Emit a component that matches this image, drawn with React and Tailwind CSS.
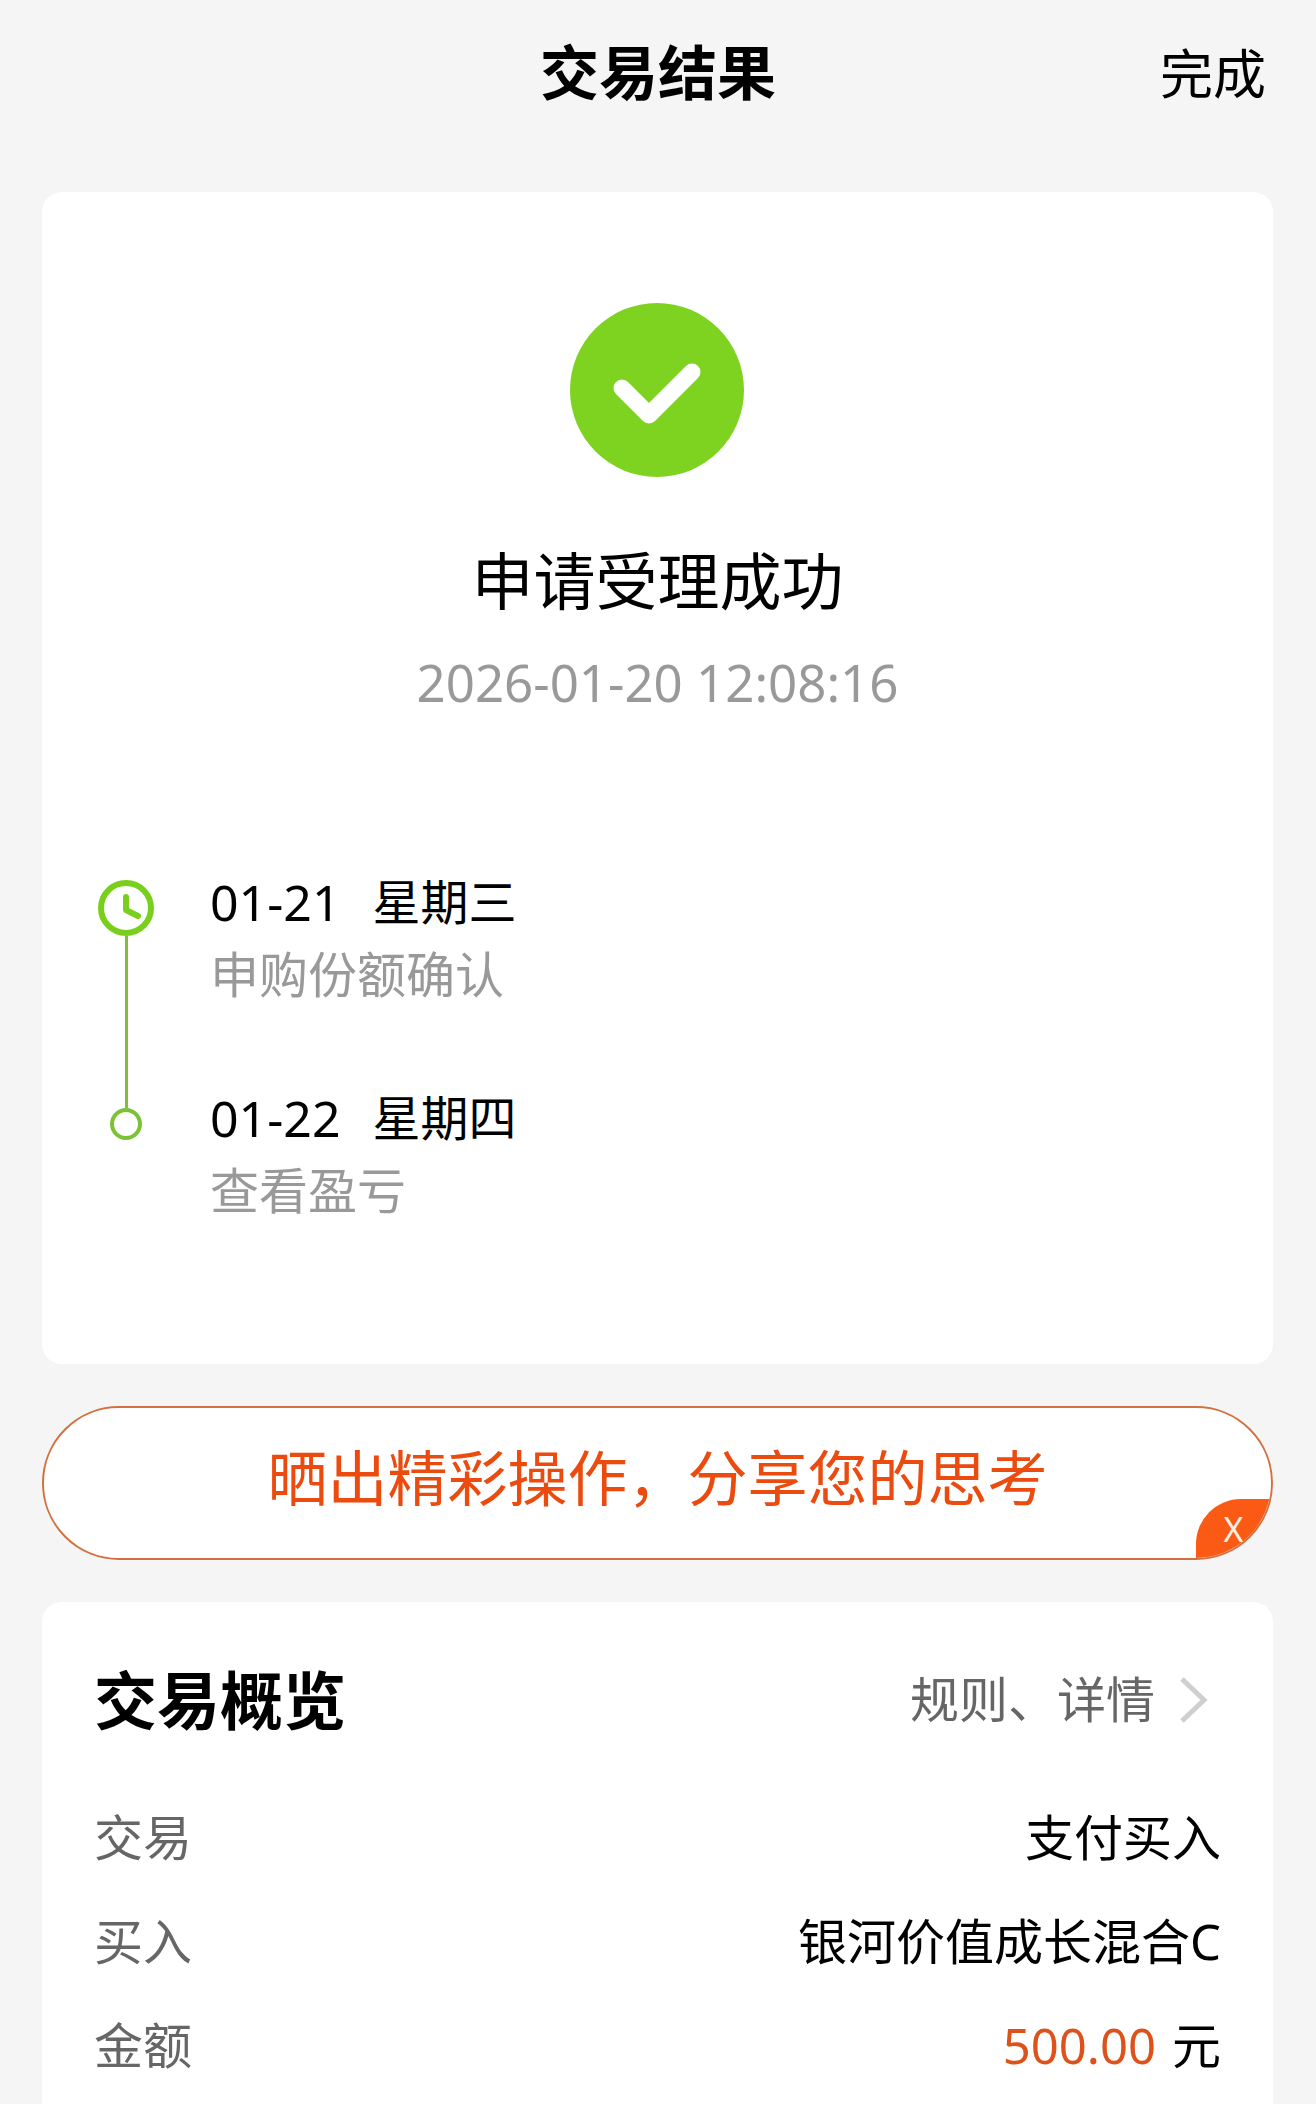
const steps = [
  { date: "01-21", weekday: "星期三", label: "申购份额确认" },
  { date: "01-22", weekday: "星期四", label: "查看盈亏" },
];

const details = [
  { label: "交易", value: "支付买入" },
  { label: "买入", value: "银河价值成长混合C" },
  { label: "金额", amount: "500.00", value: "元" },
];

const SuccessIcon = () => (
  <svg width="180" height="176" viewBox="0 0 180 176" aria-hidden="true">
    <circle cx="89" cy="88" r="87" fill="#7ed321" />
    <path
      d="M54 86 L81 113 L124 70"
      fill="none"
      stroke="#fff"
      strokeWidth="17"
      strokeLinecap="round"
      strokeLinejoin="round"
    />
  </svg>
);

const ClockIcon = () => (
  <svg width="56" height="56" viewBox="0 0 56 56" aria-hidden="true">
    <circle cx="28" cy="28" r="25" fill="none" stroke="#78d01c" strokeWidth="6" />
    <path
      d="M28 17 V30 L40 36"
      fill="none"
      stroke="#78d01c"
      strokeWidth="6"
      strokeLinecap="round"
      strokeLinejoin="round"
    />
  </svg>
);

const Header = () => (
  <header className="grid grid-cols-[1fr_auto_1fr] items-end pt-7 pb-[76px] px-[50px]">
    <h1 className="col-start-2 text-[59px] leading-[88px] font-bold">
      交易结果
    </h1>
    <button type="button" className="justify-self-end text-[53px] leading-[84px]">
      完成
    </button>
  </header>
);

const ResultCard = () => (
  <section className="rounded-[20px] bg-white pt-[110px] pb-[138px]">
    <div className="flex flex-col items-center">
      <SuccessIcon />
      <h2 className="mt-[58px] text-[62px] leading-[90px]">申请受理成功</h2>
      <time className="mt-[26px] text-[51px] leading-[60px] text-[#999]">
        2026-01-20 12:08:16
      </time>
    </div>
    <div className="mt-[154px] flex gap-14 pl-14">
      <div className="flex flex-col items-center pt-[14px]">
        <ClockIcon />
        <span className="h-[172px] w-[3px] bg-[#7bc236]" />
        <span className="size-8 rounded-full border-4 border-[#7bc236]" />
      </div>
      <ol className="flex flex-col gap-[72px]">
        {steps.map((step) => (
          <li key={step.date}>
            <p className="flex gap-8 text-[50px] leading-[72px]">
              <span>{step.date}</span>
              <span className="text-[48px]">{step.weekday}</span>
            </p>
            <p className="text-[49px] leading-[72px] text-[#999]">
              {step.label}
            </p>
          </li>
        ))}
      </ol>
    </div>
  </section>
);

const ShareBanner = () => (
  <div className="relative mt-[42px] overflow-hidden rounded-full border-2 border-[#d4703f] bg-white">
    <button
      type="button"
      className="block w-full pt-[26px] pb-9 text-center text-[60px] leading-[88px] text-[#eb4b0e]"
    >
      晒出精彩操作，分享您的思考
    </button>
    <button
      type="button"
      aria-label="关闭"
      className="absolute right-0 bottom-0 h-[59px] w-[75px] rounded-tl-[45px] bg-[#fb5a14] text-[34px] leading-[56px] text-[#fff0e0]"
    >
      X
    </button>
  </div>
);

const OverviewCard = () => (
  <section className="mt-[42px] flex-1 rounded-t-[20px] bg-white px-[52px] pt-[50px] pb-5">
    <div className="flex items-center justify-between">
      <h2 className="text-[63px] leading-[96px] font-bold">交易概览</h2>
      <a href="#rules" className="mr-3 flex items-center gap-6 text-[49px] text-[#666]">
        规则、详情
        <svg width="30" height="48" viewBox="0 0 30 48" aria-hidden="true">
          <path d="M3 3 L25 24 L3 45" fill="none" stroke="#cfcfcf" strokeWidth="5" />
        </svg>
      </a>
    </div>
    <dl className="mt-[53px] flex flex-col gap-8 text-[49px] leading-[72px]">
      {details.map((item) => (
        <div key={item.label} className="flex justify-between">
          <dt className="text-[#666]">{item.label}</dt>
          <dd className="flex gap-4">
            {item.amount && <span className="text-[#dc521a]">{item.amount}</span>}
            <span>{item.value}</span>
          </dd>
        </div>
      ))}
    </dl>
  </section>
);

const App = () => {
  return (
    <div
      lang="zh-CN"
      className="flex min-h-screen flex-col bg-[#f5f5f5] font-['Noto_Sans','Noto_Sans_CJK_SC',sans-serif] text-black"
    >
      <Header />
      <main className="flex flex-1 flex-col pr-[43px] pl-[42px]">
        <ResultCard />
        <ShareBanner />
        <OverviewCard />
      </main>
    </div>
  );
};

export default App;
